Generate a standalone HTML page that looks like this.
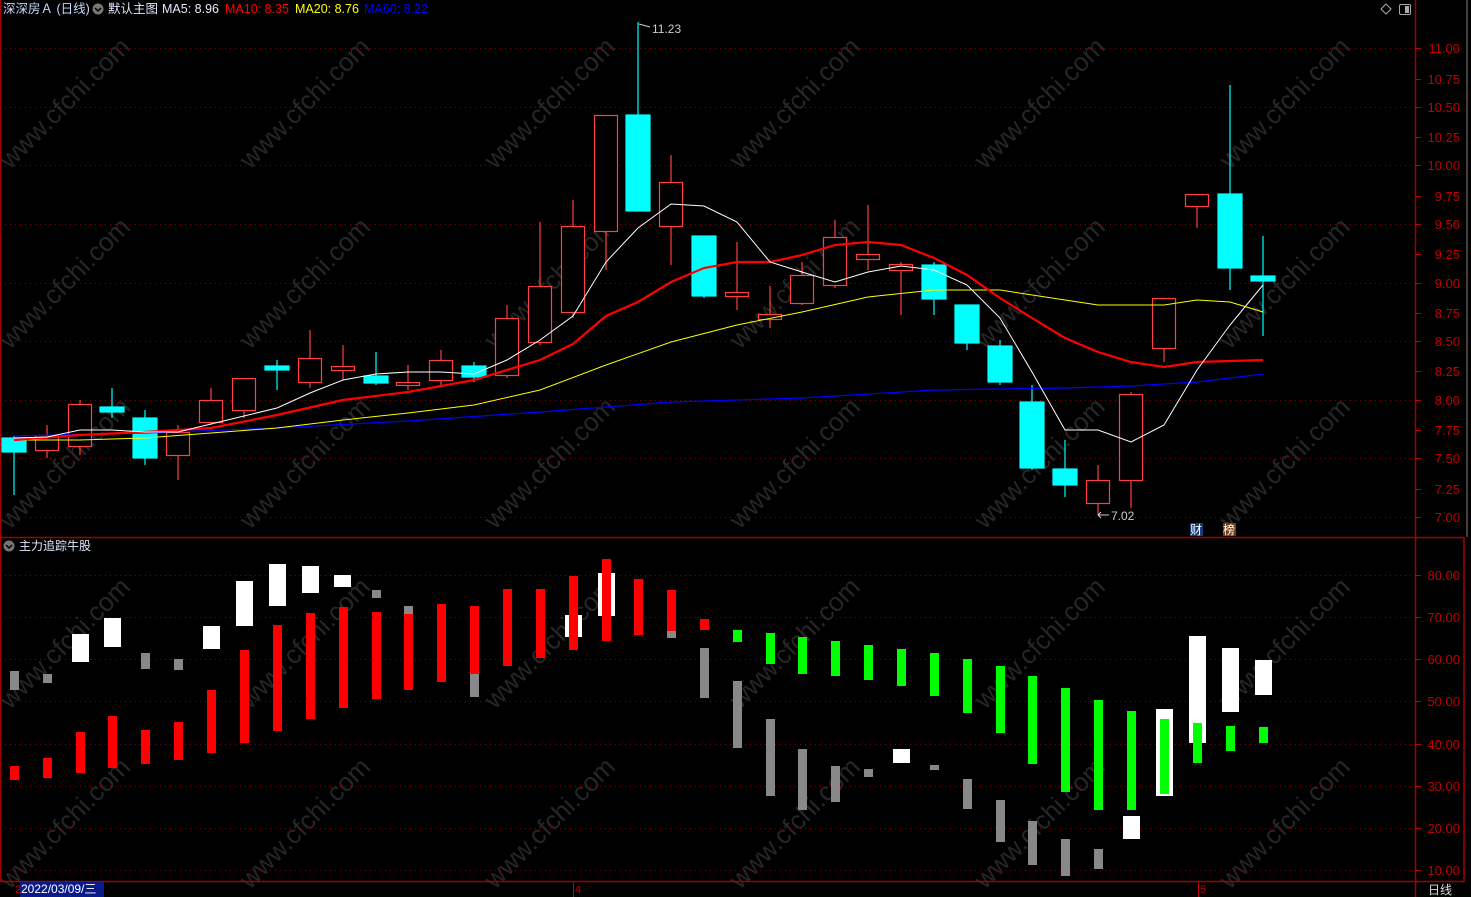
<!DOCTYPE html>
<html><head><meta charset="utf-8"><style>
html,body{margin:0;padding:0;background:#000;overflow:hidden}
svg{display:block}
text{font-family:"Liberation Sans","Noto Sans CJK SC",sans-serif}
</style></head><body>
<svg width="1471" height="897" viewBox="0 0 1471 897" xmlns="http://www.w3.org/2000/svg">
<rect width="1471" height="897" fill="#000"/>
<!-- watermarks -->
<g fill="#262626" font-size="26" font-family="Liberation Sans,sans-serif">
<text transform="translate(10,170) rotate(-45)">www.cfchi.com</text>
<text transform="translate(250,170) rotate(-45)">www.cfchi.com</text>
<text transform="translate(495,170) rotate(-45)">www.cfchi.com</text>
<text transform="translate(740,170) rotate(-45)">www.cfchi.com</text>
<text transform="translate(985,170) rotate(-45)">www.cfchi.com</text>
<text transform="translate(1230,170) rotate(-45)">www.cfchi.com</text>
<text transform="translate(10,350) rotate(-45)">www.cfchi.com</text>
<text transform="translate(250,350) rotate(-45)">www.cfchi.com</text>
<text transform="translate(495,350) rotate(-45)">www.cfchi.com</text>
<text transform="translate(740,350) rotate(-45)">www.cfchi.com</text>
<text transform="translate(985,350) rotate(-45)">www.cfchi.com</text>
<text transform="translate(1230,350) rotate(-45)">www.cfchi.com</text>
<text transform="translate(10,530) rotate(-45)">www.cfchi.com</text>
<text transform="translate(250,530) rotate(-45)">www.cfchi.com</text>
<text transform="translate(495,530) rotate(-45)">www.cfchi.com</text>
<text transform="translate(740,530) rotate(-45)">www.cfchi.com</text>
<text transform="translate(985,530) rotate(-45)">www.cfchi.com</text>
<text transform="translate(1230,530) rotate(-45)">www.cfchi.com</text>
<text transform="translate(10,710) rotate(-45)">www.cfchi.com</text>
<text transform="translate(250,710) rotate(-45)">www.cfchi.com</text>
<text transform="translate(495,710) rotate(-45)">www.cfchi.com</text>
<text transform="translate(740,710) rotate(-45)">www.cfchi.com</text>
<text transform="translate(985,710) rotate(-45)">www.cfchi.com</text>
<text transform="translate(1230,710) rotate(-45)">www.cfchi.com</text>
<text transform="translate(10,890) rotate(-45)">www.cfchi.com</text>
<text transform="translate(250,890) rotate(-45)">www.cfchi.com</text>
<text transform="translate(495,890) rotate(-45)">www.cfchi.com</text>
<text transform="translate(740,890) rotate(-45)">www.cfchi.com</text>
<text transform="translate(985,890) rotate(-45)">www.cfchi.com</text>
<text transform="translate(1230,890) rotate(-45)">www.cfchi.com</text>
</g>
<!-- grids -->
<g stroke="#8b0000" stroke-width="1" stroke-dasharray="1,4">
<line x1="0" x2="1415" y1="48.5" y2="48.5"/><line x1="0" x2="1415" y1="107.5" y2="107.5"/>
<line x1="0" x2="1415" y1="165.5" y2="165.5"/><line x1="0" x2="1415" y1="224.5" y2="224.5"/>
<line x1="0" x2="1415" y1="283.5" y2="283.5"/><line x1="0" x2="1415" y1="341.5" y2="341.5"/>
<line x1="0" x2="1415" y1="400.5" y2="400.5"/><line x1="0" x2="1415" y1="458.5" y2="458.5"/>
<line x1="0" x2="1415" y1="517.5" y2="517.5"/>
<line x1="0" x2="1415" y1="575.5" y2="575.5"/><line x1="0" x2="1415" y1="617.5" y2="617.5"/>
<line x1="0" x2="1415" y1="659.5" y2="659.5"/><line x1="0" x2="1415" y1="701.5" y2="701.5"/>
<line x1="0" x2="1415" y1="744.5" y2="744.5"/><line x1="0" x2="1415" y1="786.5" y2="786.5"/>
<line x1="0" x2="1415" y1="828.5" y2="828.5"/><line x1="0" x2="1415" y1="870.5" y2="870.5"/>
</g>
<!-- frame lines -->
<g stroke="#a00000" stroke-width="1.5">
<line x1="1415.5" y1="0" x2="1415.5" y2="897"/>
<line x1="0" y1="537.5" x2="1464" y2="537.5"/>
<line x1="0" y1="881.5" x2="1464" y2="881.5"/>
<line x1="1464" y1="537" x2="1464" y2="882"/>
<line x1="0.5" y1="0" x2="0.5" y2="881"/>
</g>
<line x1="1467" y1="0" x2="1467" y2="537" stroke="#555" stroke-width="1.5"/>
<!-- price axis -->
<g fill="#c00000" font-size="13" text-anchor="end">
<text x="1460" y="53">11.00</text><text x="1460" y="84">10.75</text><text x="1460" y="112">10.50</text>
<text x="1460" y="142">10.25</text><text x="1460" y="170">10.00</text><text x="1460" y="201">9.75</text>
<text x="1460" y="229">9.50</text><text x="1460" y="259">9.25</text><text x="1460" y="288">9.00</text>
<text x="1460" y="318">8.75</text><text x="1460" y="346">8.50</text><text x="1460" y="376">8.25</text>
<text x="1460" y="405">8.00</text><text x="1460" y="435">7.75</text><text x="1460" y="463">7.50</text>
<text x="1460" y="494">7.25</text><text x="1460" y="522">7.00</text>
<text x="1460" y="580">80.00</text><text x="1460" y="622">70.00</text><text x="1460" y="664">60.00</text>
<text x="1460" y="706">50.00</text><text x="1460" y="749">40.00</text><text x="1460" y="791">30.00</text>
<text x="1460" y="833">20.00</text><text x="1460" y="875">10.00</text>
</g>
<g stroke="#c00000">
<line x1="1415" x2="1421" y1="48.5" y2="48.5"/><line x1="1415" x2="1421" y1="79.5" y2="79.5"/><line x1="1415" x2="1421" y1="107.5" y2="107.5"/><line x1="1415" x2="1421" y1="137.5" y2="137.5"/><line x1="1415" x2="1421" y1="165.5" y2="165.5"/><line x1="1415" x2="1421" y1="196.5" y2="196.5"/><line x1="1415" x2="1421" y1="224.5" y2="224.5"/><line x1="1415" x2="1421" y1="254.5" y2="254.5"/><line x1="1415" x2="1421" y1="283.5" y2="283.5"/><line x1="1415" x2="1421" y1="313.5" y2="313.5"/><line x1="1415" x2="1421" y1="341.5" y2="341.5"/><line x1="1415" x2="1421" y1="371.5" y2="371.5"/><line x1="1415" x2="1421" y1="400.5" y2="400.5"/><line x1="1415" x2="1421" y1="430.5" y2="430.5"/><line x1="1415" x2="1421" y1="458.5" y2="458.5"/><line x1="1415" x2="1421" y1="489.5" y2="489.5"/><line x1="1415" x2="1421" y1="517.5" y2="517.5"/>
<line x1="1415" x2="1421" y1="575.5" y2="575.5"/><line x1="1415" x2="1421" y1="617.5" y2="617.5"/><line x1="1415" x2="1421" y1="659.5" y2="659.5"/><line x1="1415" x2="1421" y1="701.5" y2="701.5"/><line x1="1415" x2="1421" y1="744.5" y2="744.5"/><line x1="1415" x2="1421" y1="786.5" y2="786.5"/><line x1="1415" x2="1421" y1="828.5" y2="828.5"/><line x1="1415" x2="1421" y1="870.5" y2="870.5"/>
</g>
<!-- header -->
<text x="3" y="13" font-size="12.5" fill="#c8d8ff">深深房Ａ (日线)</text>
<circle cx="98" cy="9" r="5.5" fill="#777"/><path d="M95 8 L98 11 L101 8" stroke="#000" stroke-width="1.5" fill="none"/>
<text x="108" y="13" font-size="12.5" fill="#e0e8ff">默认主图</text>
<text x="162" y="13" font-size="12.5" fill="#e8e8ff">MA5: 8.96</text>
<text x="225" y="13" font-size="12.5" fill="#ff0000">MA10: 8.35</text>
<text x="295" y="13" font-size="12.5" fill="#ffff00">MA20: 8.76</text>
<text x="364" y="13" font-size="12.5" fill="#0000ff">MA60: 8.22</text>
<path d="M1386 4 L1391 9 L1386 14 L1381 9 Z" stroke="#aaa" fill="none"/>
<rect x="1399.5" y="4.5" width="11" height="10" rx="1.5" stroke="#aaa" fill="none"/><rect x="1405" y="6" width="4" height="7" fill="#aaa"/>
<!-- candles -->
<g stroke="#ff4040" stroke-width="1.2" fill="#000">
<line x1="47" y1="425" x2="47" y2="458"/><rect x="35.5" y="435.5" width="23" height="15"/>
<line x1="80" y1="400" x2="80" y2="455"/><rect x="68.5" y="404.5" width="23" height="42"/>
<line x1="178" y1="425" x2="178" y2="480"/><rect x="166.5" y="432.5" width="23" height="23"/>
<line x1="211" y1="388" x2="211" y2="425"/><rect x="199.5" y="400.5" width="23" height="22"/>
<line x1="244" y1="378" x2="244" y2="418"/><rect x="232.5" y="378.5" width="23" height="32"/>
<line x1="310" y1="330" x2="310" y2="388"/><rect x="298.5" y="358.5" width="23" height="24"/>
<line x1="343" y1="345" x2="343" y2="380"/><rect x="331.5" y="366.5" width="23" height="4"/>
<line x1="408" y1="365" x2="408" y2="390"/><rect x="396.5" y="382.5" width="23" height="3"/>
<line x1="441" y1="350" x2="441" y2="385"/><rect x="429.5" y="360.5" width="23" height="20"/>
<line x1="507" y1="305" x2="507" y2="378"/><rect x="495.5" y="318.5" width="23" height="57"/>
<line x1="540" y1="222" x2="540" y2="345"/><rect x="528.5" y="286.5" width="23" height="56"/>
<line x1="573" y1="200" x2="573" y2="318"/><rect x="561.5" y="226.5" width="23" height="86"/>
<line x1="606" y1="116" x2="606" y2="270"/><rect x="594.5" y="115.5" width="23" height="116"/>
<line x1="671" y1="155" x2="671" y2="265"/><rect x="659.5" y="182.5" width="23" height="44"/>
<line x1="737" y1="242" x2="737" y2="310"/><rect x="725.5" y="292.5" width="23" height="4"/>
<line x1="770" y1="286" x2="770" y2="328"/><rect x="758.5" y="314.5" width="23" height="5"/>
<line x1="802" y1="262" x2="802" y2="305"/><rect x="790.5" y="275.5" width="23" height="28"/>
<line x1="835" y1="220" x2="835" y2="288"/><rect x="823.5" y="237.5" width="23" height="48"/>
<line x1="868" y1="205" x2="868" y2="270"/><rect x="856.5" y="254.5" width="23" height="5"/>
<line x1="901" y1="262" x2="901" y2="315"/><rect x="889.5" y="264.5" width="23" height="6"/>
<line x1="1098" y1="465" x2="1098" y2="515"/><rect x="1086.5" y="480.5" width="23" height="23"/>
<line x1="1131" y1="392" x2="1131" y2="508"/><rect x="1119.5" y="394.5" width="23" height="86"/>
<line x1="1164" y1="298" x2="1164" y2="362"/><rect x="1152.5" y="298.5" width="23" height="50"/>
<line x1="1197" y1="194" x2="1197" y2="228"/><rect x="1185.5" y="194.5" width="23" height="12"/>
</g>
<g stroke="#00ffff" stroke-width="1.2" fill="#00ffff">
<line x1="14" y1="436" x2="14" y2="495"/><rect x="2" y="438" width="24" height="14"/>
<line x1="112" y1="388" x2="112" y2="418"/><rect x="100" y="407" width="24" height="5"/>
<line x1="145" y1="410" x2="145" y2="465"/><rect x="133" y="418" width="24" height="40"/>
<line x1="277" y1="360" x2="277" y2="390"/><rect x="265" y="366" width="24" height="4"/>
<line x1="376" y1="352" x2="376" y2="385"/><rect x="364" y="376" width="24" height="7"/>
<line x1="474" y1="362" x2="474" y2="382"/><rect x="462" y="366" width="24" height="11"/>
<line x1="638" y1="22" x2="638" y2="211"/><rect x="626" y="115" width="24" height="96"/>
<line x1="704" y1="236" x2="704" y2="298"/><rect x="692" y="236" width="24" height="60"/>
<line x1="934" y1="262" x2="934" y2="315"/><rect x="922" y="265" width="24" height="34"/>
<line x1="967" y1="305" x2="967" y2="350"/><rect x="955" y="305" width="24" height="38"/>
<line x1="1000" y1="340" x2="1000" y2="385"/><rect x="988" y="346" width="24" height="36"/>
<line x1="1032" y1="385" x2="1032" y2="470"/><rect x="1020" y="402" width="24" height="66"/>
<line x1="1065" y1="440" x2="1065" y2="497"/><rect x="1053" y="469" width="24" height="16"/>
<line x1="1230" y1="85" x2="1230" y2="290"/><rect x="1218" y="194" width="24" height="74"/>
<line x1="1263" y1="236" x2="1263" y2="336"/><rect x="1251" y="276" width="24" height="5"/>
</g>
<!-- MA lines -->
<polyline fill="none" stroke="#0000ff" stroke-width="1.2" points="14,436 145,433 277,428 408,421 540,412 671,402 802,398 934,390 1065,388 1131,386 1197,382 1263,374"/>
<polyline fill="none" stroke="#ffff00" stroke-width="1" points="14,440 80,440 145,438 211,433 277,428 343,420 408,413 474,405 540,390 606,365 671,342 737,325 802,312 868,297 934,290 1000,290 1065,300 1098,305 1164,305 1197,300 1230,302 1263,312"/>
<polyline fill="none" stroke="#ff0000" stroke-width="2.2" points="14,440 80,435 145,432 211,428 277,415 343,400 408,392 474,380 540,360 573,344 606,316 638,302 671,282 704,268 737,262 770,262 802,255 835,245 868,242 901,245 934,258 967,275 1000,298 1032,318 1065,338 1098,352 1131,362 1164,367 1197,362 1230,361 1263,360"/>
<polyline fill="none" stroke="#ffffff" stroke-width="1" points="14,438 47,437 80,430 112,430 145,432 178,432 211,424 244,416 277,408 310,393 343,380 376,374 408,372 441,372 474,374 507,360 540,340 573,316 606,262 638,228 671,204 704,206 737,222 770,262 802,272 835,282 868,272 901,266 934,270 967,285 1000,318 1032,372 1065,430 1098,430 1131,442 1164,425 1197,370 1230,325 1263,285"/>
<!-- high/low labels -->
<path d="M639 24 L650 27" stroke="#ccc" fill="none"/>
<text x="652" y="33" font-size="12" fill="#ccc">11.23</text>
<path d="M1098 515 L1109 515 M1098 515 L1101 512 M1098 515 L1101 518" stroke="#ccc" fill="none"/>
<text x="1111" y="520" font-size="12" fill="#ccc">7.02</text>
<rect x="1190" y="523" width="13" height="13" fill="#123a78"/><text x="1190" y="534" font-size="12" fill="#fff">财</text>
<rect x="1223" y="523" width="13" height="13" fill="#7a3a10"/><text x="1223" y="534" font-size="12" fill="#fff">榜</text>
<!-- indicator header -->
<circle cx="9" cy="546" r="5.5" fill="#777"/><path d="M6 545 L9 548 L12 545" stroke="#000" stroke-width="1.5" fill="none"/>
<text x="19" y="550" font-size="12" fill="#e0e8ff">主力追踪牛股</text>
<!-- indicator bars: gray -->
<g fill="#888">
<rect x="10" y="671" width="9" height="19"/><rect x="43" y="674" width="9" height="9"/>
<rect x="141" y="653" width="9" height="16"/><rect x="174" y="659" width="9" height="11"/>
<rect x="372" y="590" width="9" height="8"/><rect x="404" y="606" width="9" height="8"/>
<rect x="470" y="674" width="9" height="23"/><rect x="667" y="631" width="9" height="7"/>
<rect x="700" y="648" width="9" height="50"/><rect x="733" y="681" width="9" height="67"/>
<rect x="766" y="719" width="9" height="77"/><rect x="798" y="749" width="9" height="61"/>
<rect x="831" y="766" width="9" height="36"/><rect x="864" y="769" width="9" height="8"/>
<rect x="930" y="765" width="9" height="5"/><rect x="963" y="779" width="9" height="30"/>
<rect x="996" y="800" width="9" height="42"/><rect x="1028" y="821" width="9" height="44"/>
<rect x="1061" y="839" width="9" height="37"/><rect x="1094" y="849" width="9" height="20"/>
</g>
<!-- white -->
<g fill="#fff">
<rect x="72" y="634" width="17" height="28"/><rect x="104" y="618" width="17" height="29"/>
<rect x="203" y="626" width="17" height="23"/><rect x="236" y="581" width="17" height="45"/>
<rect x="269" y="564" width="17" height="42"/><rect x="302" y="566" width="17" height="27"/>
<rect x="334" y="575" width="17" height="12"/>
<rect x="565" y="615" width="17" height="22"/><rect x="598" y="573" width="17" height="43"/>
<rect x="893" y="749" width="17" height="14"/><rect x="1123" y="816" width="17" height="23"/>
<rect x="1156" y="709" width="17" height="87"/>
<rect x="1189" y="636" width="17" height="107"/><rect x="1222" y="648" width="17" height="64"/>
<rect x="1255" y="660" width="17" height="35"/>
</g>
<!-- red -->
<g fill="#ff0000">
<rect x="10" y="766" width="9" height="14"/><rect x="43" y="758" width="9" height="20"/>
<rect x="76" y="732" width="9" height="41"/><rect x="108" y="716" width="9" height="52"/>
<rect x="141" y="730" width="9" height="34"/><rect x="174" y="722" width="9" height="38"/>
<rect x="207" y="690" width="9" height="63"/><rect x="240" y="650" width="9" height="93"/>
<rect x="273" y="625" width="9" height="106"/><rect x="306" y="613" width="9" height="106"/>
<rect x="339" y="607" width="9" height="101"/><rect x="372" y="612" width="9" height="87"/>
<rect x="404" y="614" width="9" height="76"/><rect x="437" y="604" width="9" height="78"/>
<rect x="470" y="606" width="9" height="68"/><rect x="503" y="589" width="9" height="77"/>
<rect x="536" y="589" width="9" height="69"/><rect x="569" y="576" width="9" height="74"/>
<rect x="602" y="559" width="9" height="82"/><rect x="634" y="579" width="9" height="56"/>
<rect x="667" y="590" width="9" height="41"/><rect x="700" y="619" width="9" height="11"/>
</g>
<!-- green -->
<g fill="#00ff00">
<rect x="733" y="630" width="9" height="12"/><rect x="766" y="633" width="9" height="31"/>
<rect x="798" y="637" width="9" height="37"/><rect x="831" y="641" width="9" height="35"/>
<rect x="864" y="645" width="9" height="35"/><rect x="897" y="649" width="9" height="37"/>
<rect x="930" y="653" width="9" height="43"/><rect x="963" y="659" width="9" height="54"/>
<rect x="996" y="666" width="9" height="67"/><rect x="1028" y="676" width="9" height="88"/>
<rect x="1061" y="688" width="9" height="104"/><rect x="1094" y="700" width="9" height="110"/>
<rect x="1127" y="711" width="9" height="99"/><rect x="1160" y="719" width="9" height="75"/>
<rect x="1193" y="723" width="9" height="40"/><rect x="1226" y="726" width="9" height="25"/>
<rect x="1259" y="727" width="9" height="16"/>
</g>
<!-- bottom axis -->
<rect x="20" y="882" width="84" height="15" fill="#0a1a8a"/>
<text x="21" y="893" font-size="12" fill="#fff">2022/03/09/三</text>
<text x="15" y="893" font-size="11" fill="#c00000">2</text>
<line x1="573.5" y1="881" x2="573.5" y2="897" stroke="#c00000"/><text x="575" y="893" font-size="11" fill="#c00000">4</text>
<line x1="1198.5" y1="881" x2="1198.5" y2="897" stroke="#c00000"/><text x="1200" y="893" font-size="11" fill="#c00000">5</text>
<text x="1428" y="894" font-size="12" fill="#ddd">日线</text>
</svg>
</body></html>
